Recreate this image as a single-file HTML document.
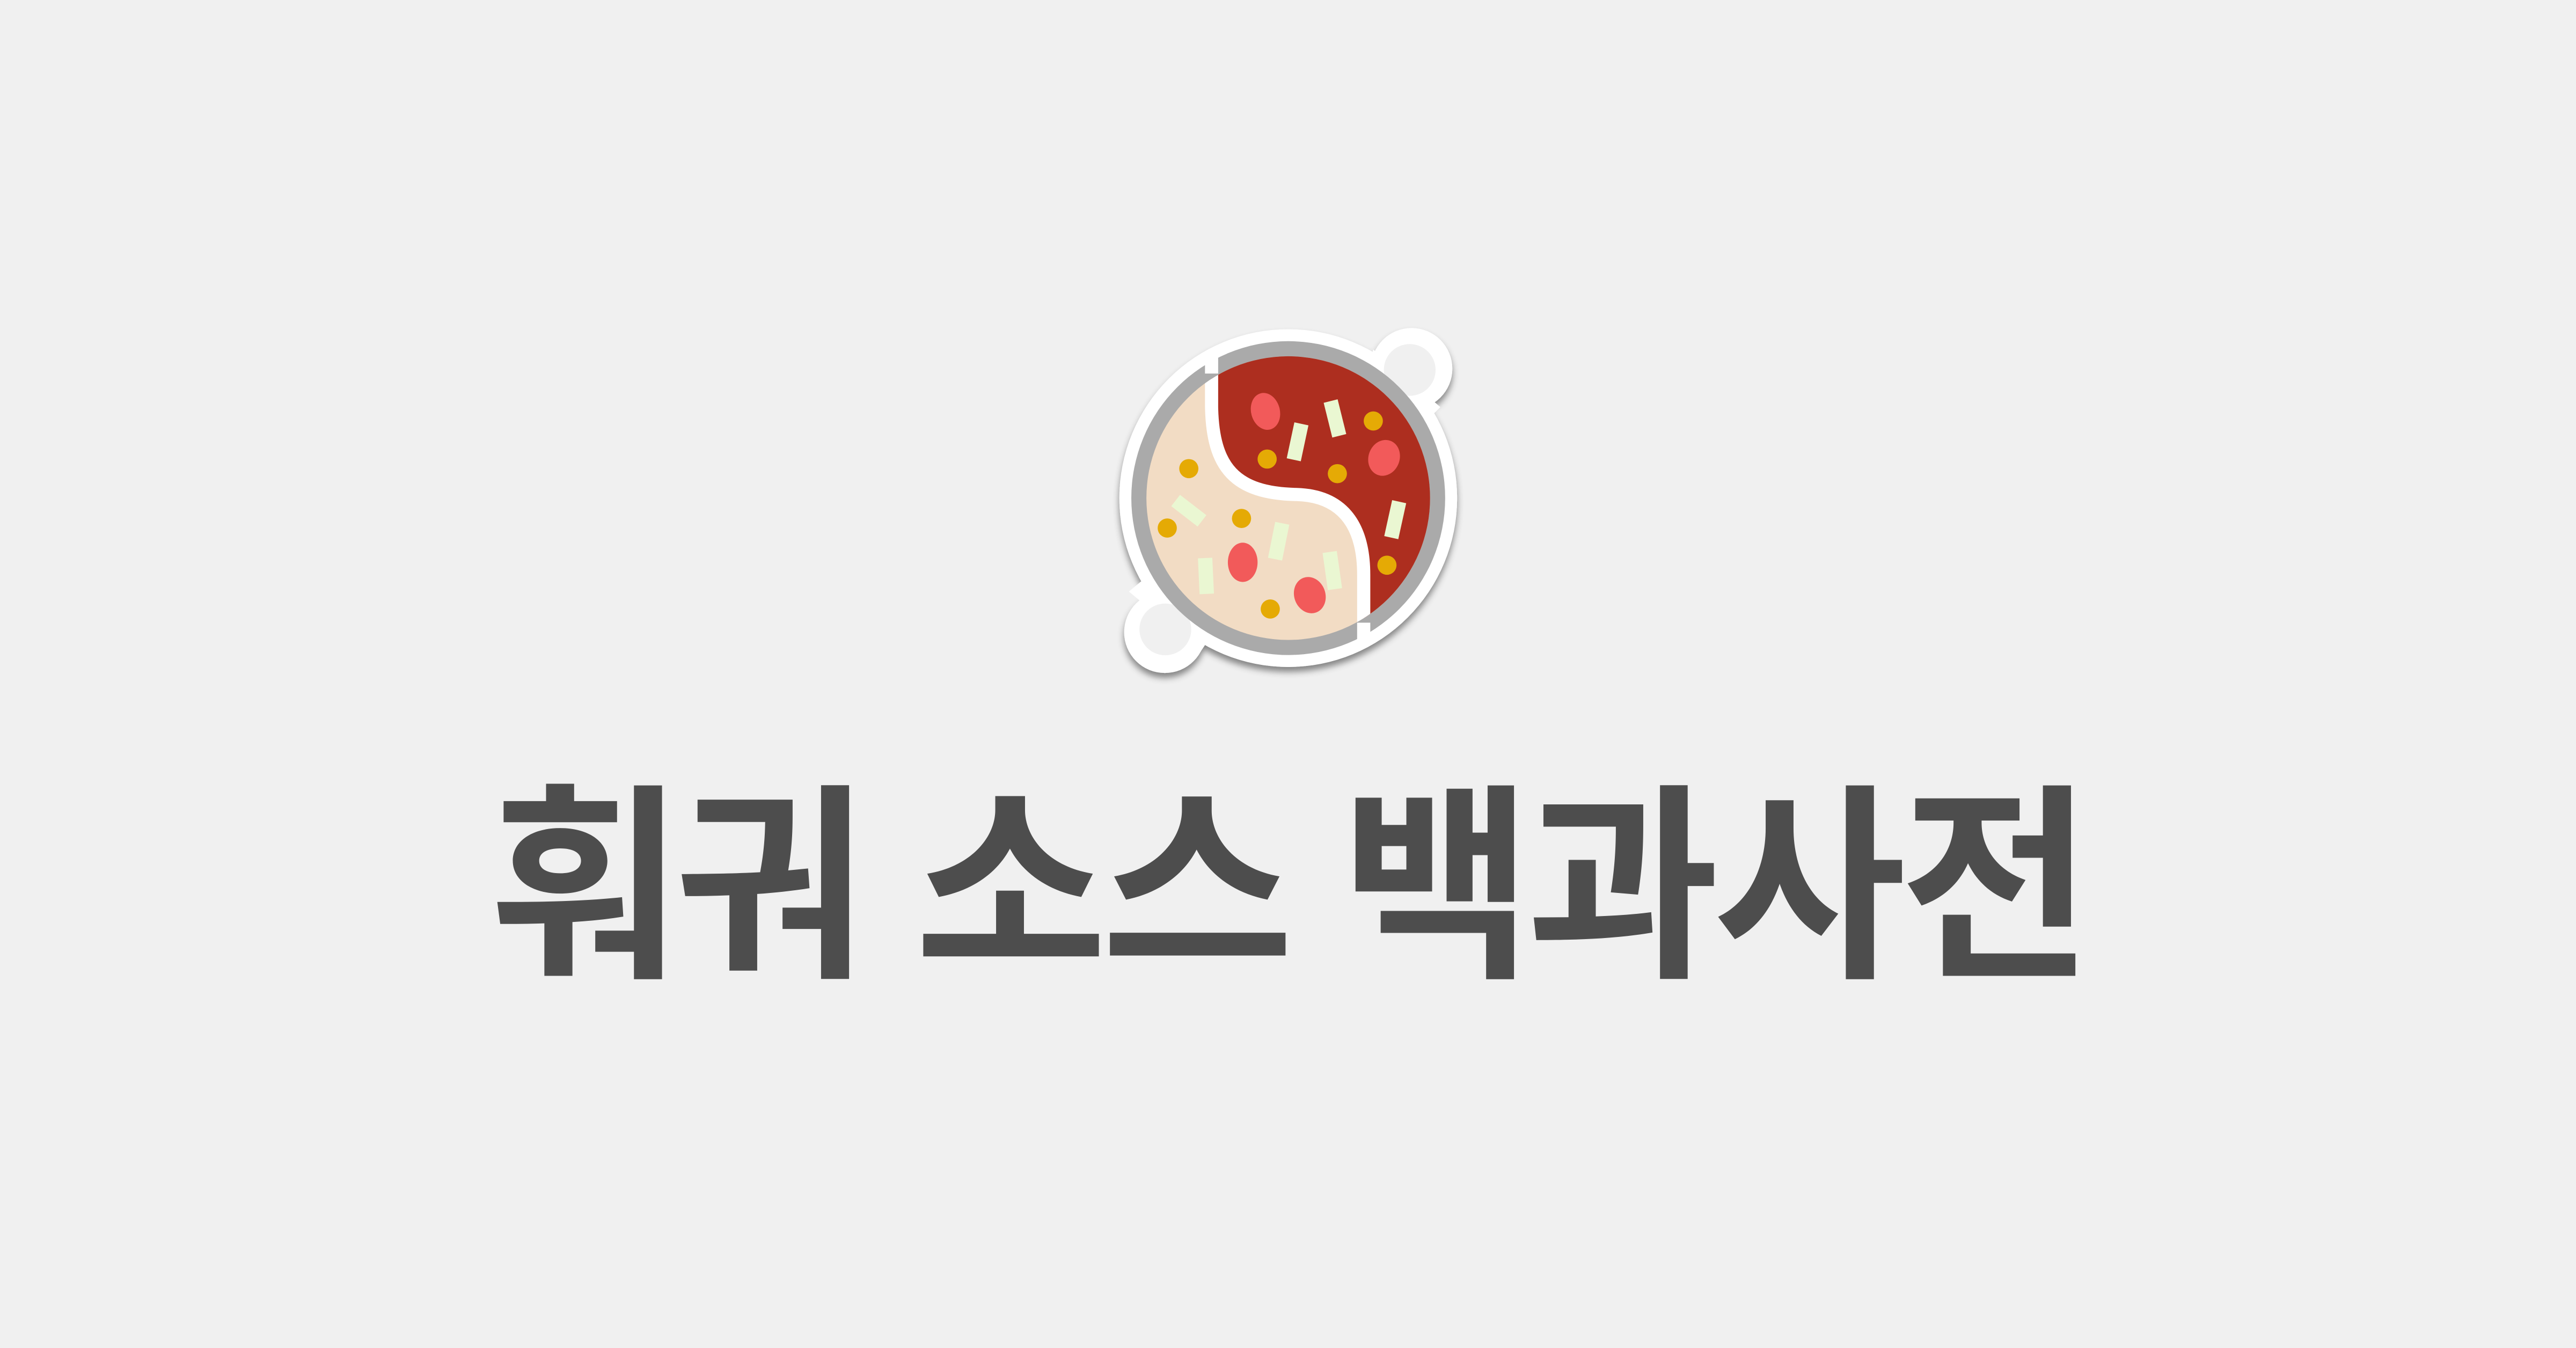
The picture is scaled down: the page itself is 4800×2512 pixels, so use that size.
<!DOCTYPE html>
<html><head><meta charset="utf-8"><style>
html,body{margin:0;padding:0;background:#f0f0f0;width:4800px;height:2512px;overflow:hidden}
.t{position:absolute;left:0;width:4800px;top:1416px;text-align:center;font-family:"Liberation Sans","Noto Sans CJK KR",sans-serif;font-weight:bold;font-size:390px;line-height:478px;color:#4d4d4d;letter-spacing:-11px}
svg{position:absolute;left:2050px;top:580px}
</style></head><body>
<svg width="700" height="700" viewBox="0 0 1568 1568">
<defs>
<filter id="sh" x="-10%" y="-10%" width="130%" height="130%"><feDropShadow dx="0" dy="20" stdDeviation="14" flood-color="#000" flood-opacity="0.45"/></filter>
<clipPath id="c"><circle cx="785" cy="780" r="592"/></clipPath>
</defs>
<g filter="url(#sh)" fill="#fff">
<circle cx="785" cy="780" r="705"/>
<circle cx="1300" cy="240" r="170"/>
<circle cx="270" cy="1340" r="170"/>
</g>
<path d="M1140 160 L1420 400 L1380 440 L1120 220Z M120 1170 L420 1420 L460 1360 L180 1120Z" fill="#fff"/>
<circle cx="1292" cy="245" r="108" fill="#f0f0f0"/>
<circle cx="272" cy="1328" r="108" fill="#f0f0f0"/>
<circle cx="785" cy="780" r="655" fill="#aaa"/>
<g clip-path="url(#c)">
<rect x="0" y="0" width="1568" height="1568" fill="#f2dcc4"/>
<path d="M465 100 L465 400 C470 650 560 760 820 765 C1000 770 1100 880 1100 1100 L1100 1500 L1600 1500 L1600 100Z" fill="#ad2e1f"/>
<path d="M465 100 L465 400 C470 650 560 760 820 765 C1000 770 1100 880 1100 1100 L1100 1500" fill="none" stroke="#fff" stroke-width="55"/>
</g>
<path d="M465 180 L465 260" stroke="#fff" stroke-width="55"/>
<path d="M1100 1300 L1100 1380" stroke="#fff" stroke-width="55"/>
<g fill="#f25a5a">
<ellipse cx="690" cy="418" rx="60" ry="78" transform="rotate(-15 690 418)"/>
<ellipse cx="1185" cy="612" rx="65" ry="76" transform="rotate(20 1185 612)"/>
<ellipse cx="595" cy="1048" rx="62" ry="82"/>
<ellipse cx="875" cy="1185" rx="65" ry="77" transform="rotate(-20 875 1185)"/>
</g>
<g fill="#e5aa05">
<circle cx="1140" cy="458" r="40"/><circle cx="697" cy="617" r="40"/><circle cx="990" cy="678" r="40"/>
<circle cx="370" cy="657" r="40"/><circle cx="280" cy="905" r="40"/><circle cx="590" cy="865" r="40"/>
<circle cx="1197" cy="1060" r="40"/><circle cx="710" cy="1243" r="40"/>
</g>
<g stroke="#eaf7d2" stroke-width="60">
<line x1="962" y1="375" x2="998" y2="520"/>
<line x1="840" y1="470" x2="808" y2="620"/>
<line x1="1248" y1="795" x2="1215" y2="945"/>
<line x1="315" y1="790" x2="425" y2="875"/>
<line x1="760" y1="885" x2="730" y2="1035"/>
<line x1="438" y1="1030" x2="445" y2="1180"/>
<line x1="958" y1="1005" x2="980" y2="1160"/>
</g>
</svg>
<div class="t">훠궈 소스 백과사전</div>
</body></html>
